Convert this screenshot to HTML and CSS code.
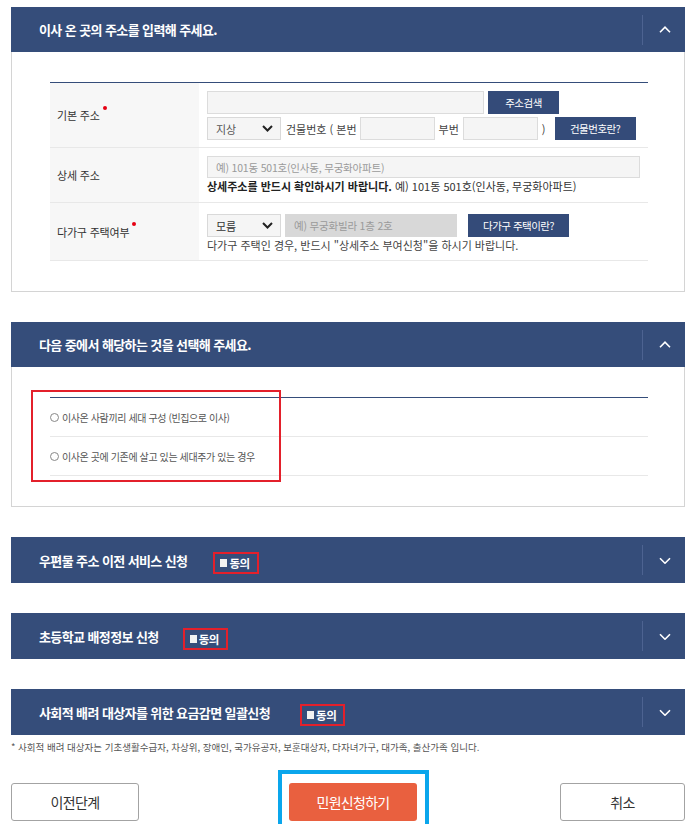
FILE: index.html
```html
<!DOCTYPE html>
<html lang="ko">
<head>
<meta charset="utf-8">
<title>전입신고</title>
<link rel="stylesheet" href="styles.css">
</head>
<body>
<div class="page">

  <section class="panel">
    <div class="panel-head">
      <h2 class="panel-title">이사 온 곳의 주소를 입력해 주세요.</h2>
      <span class="toggle"><svg width="12" height="7" viewBox="0 0 12 7"><path d="M1 6.2 L6 1.2 L11 6.2" fill="none" stroke="#fff" stroke-width="1.6"/></svg></span>
    </div>
    <div class="panel-body">
      <div class="form-table">
        <div class="row row-basic">
          <div class="th">기본 주소<span class="req"></span></div>
          <div class="td">
            <div class="line">
              <input class="inp inp-addr" type="text">
              <button class="btn-navy btn-search" type="button">주소검색</button>
            </div>
            <div class="line">
              <div class="select"><span>지상</span><svg width="11" height="7" viewBox="0 0 11 7"><path d="M1 1 L5.5 5.5 L10 1" fill="none" stroke="#222" stroke-width="2"/></svg></div>
              <span class="txt txt-bldg">건물번호 ( 본번</span>
              <input class="inp inp-num" type="text">
              <span class="txt txt-sub">부번</span>
              <input class="inp inp-num" type="text">
              <span class="txt txt-paren">)</span>
              <button class="btn-navy btn-bldg" type="button">건물번호란?</button>
            </div>
          </div>
        </div>
        <div class="row row-detail">
          <div class="th">상세 주소</div>
          <div class="td">
            <input class="inp inp-detail" type="text" placeholder="예) 101동 501호(인사동, 무궁화아파트)">
            <p class="help"><strong>상세주소를 반드시 확인하시기 바랍니다.</strong> 예) 101동 501호(인사동, 무궁화아파트)</p>
          </div>
        </div>
        <div class="row row-multi">
          <div class="th">다가구 주택여부<span class="req"></span></div>
          <div class="td">
            <div class="line">
              <div class="select"><span class="sel-strong">모름</span><svg width="11" height="7" viewBox="0 0 11 7"><path d="M1 1 L5.5 5.5 L10 1" fill="none" stroke="#222" stroke-width="2"/></svg></div>
              <input class="inp inp-disabled" type="text" placeholder="예) 무궁화빌라 1층 2호" disabled>
              <button class="btn-navy btn-multi" type="button">다가구 주택이란?</button>
            </div>
            <p class="help help-light">다가구 주택인 경우, 반드시 "상세주소 부여신청"을 하시기 바랍니다.</p>
          </div>
        </div>
      </div>
    </div>
  </section>

  <section class="panel">
    <div class="panel-head">
      <h2 class="panel-title">다음 중에서 해당하는 것을 선택해 주세요.</h2>
      <span class="toggle"><svg width="12" height="7" viewBox="0 0 12 7"><path d="M1 6.2 L6 1.2 L11 6.2" fill="none" stroke="#fff" stroke-width="1.6"/></svg></span>
    </div>
    <div class="panel-body panel-body-radio">
      <div class="radio-list">
        <label class="radio-row"><span class="radio"></span>이사온 사람끼리 세대 구성 (빈집으로 이사)</label>
        <label class="radio-row"><span class="radio"></span>이사온 곳에 기존에 살고 있는 세대주가 있는 경우</label>
      </div>
      <span class="mark-box"></span>
    </div>
  </section>

  <section class="panel panel-collapsed">
    <div class="panel-head head-tall">
      <h2 class="panel-title">우편물 주소 이전 서비스 신청</h2>
      <span class="agree agree-a"><i class="sq"></i>동의</span>
      <span class="toggle"><svg width="12" height="7" viewBox="0 0 12 7"><path d="M1 1.2 L6 6.2 L11 1.2" fill="none" stroke="#fff" stroke-width="1.6"/></svg></span>
    </div>
  </section>

  <section class="panel panel-collapsed">
    <div class="panel-head head-tall">
      <h2 class="panel-title">초등학교 배정정보 신청</h2>
      <span class="agree agree-b"><i class="sq"></i>동의</span>
      <span class="toggle"><svg width="12" height="7" viewBox="0 0 12 7"><path d="M1 1.2 L6 6.2 L11 1.2" fill="none" stroke="#fff" stroke-width="1.6"/></svg></span>
    </div>
  </section>

  <section class="panel panel-collapsed">
    <div class="panel-head head-tall">
      <h2 class="panel-title">사회적 배려 대상자를 위한 요금감면 일괄신청</h2>
      <span class="agree agree-c"><i class="sq"></i>동의</span>
      <span class="toggle"><svg width="12" height="7" viewBox="0 0 12 7"><path d="M1 1.2 L6 6.2 L11 1.2" fill="none" stroke="#fff" stroke-width="1.6"/></svg></span>
    </div>
  </section>

  <p class="note">* 사회적 배려 대상자는 기초생활수급자, 차상위, 장애인, 국가유공자, 보훈대상자, 다자녀가구, 대가족, 출산가족 입니다.</p>

  <div class="btn-row">
    <button class="btn-line btn-prev" type="button">이전단계</button>
    <div class="highlight"><button class="btn-submit" type="button">민원신청하기</button></div>
    <button class="btn-line btn-cancel" type="button">취소</button>
  </div>

</div>
</body>
</html>
```

FILE: styles.css
```css
* { box-sizing: border-box; }

html, body {
  margin: 0;
  padding: 0;
  background: #fff;
}

body {
  font-family: "Noto Sans CJK KR", "Noto Sans", sans-serif;
  color: #333;
  font-size: 11px;
}

.page {
  width: 674px;
  margin-left: 11px;
  padding-top: 7px;
}

.panel + .panel { margin-top: 30px; }

.panel-head {
  display: flex;
  align-items: center;
  height: 45px;
  padding-left: 28px;
  background: #354d7a;
}

.head-tall { height: 46px; }

.panel-title {
  margin: 0;
  font-size: 13px;
  line-height: 17px;
  font-weight: 700;
  letter-spacing: -0.6px;
  color: #fff;
}

.panel-head .toggle { margin-left: auto; }

.toggle {
  display: flex;
  align-items: center;
  justify-content: center;
  width: 43px;
  height: 30px;
  border-left: 1px solid #4d6391;
  padding-left: 2px;
}

.agree {
  display: inline-flex;
  align-items: center;
  height: 22px;
  margin-top: 5px;
  padding: 0 7px 0 5px;
  border: 2px solid #e3202b;
  color: #fff;
  font-size: 11.5px;
  font-weight: 700;
  letter-spacing: -0.5px;
  line-height: 14px;
}

.agree-a { margin-left: 26px; }
.agree-b { margin-left: 24px; }
.agree-c { margin-left: 30px; }

.agree .sq {
  display: inline-block;
  width: 7px;
  height: 8px;
  margin-right: 2px;
  background: #f2f2f2;
}

.panel-body {
  position: relative;
  border: 1px solid #d4d4d4;
  border-top: none;
  padding: 30px 36px 30px 38px;
}

.form-table { border-top: 1px solid #354d7a; }

.row {
  display: grid;
  grid-template-columns: 149px 1fr;
  border-bottom: 1px solid #e8e8e8;
}

.th {
  display: flex;
  align-items: center;
  padding-left: 7px;
  background: #f7f7f7;
  font-size: 11px;
  line-height: 16px;
  letter-spacing: -0.2px;
  color: #333;
}

.req {
  align-self: center;
  width: 4px;
  height: 4px;
  margin-left: 3px;
  margin-bottom: 15px;
  border-radius: 50%;
  background: #e60012;
}

.td { padding-left: 8px; }

.row-basic .td {
  display: flex;
  flex-direction: column;
  gap: 3px;
  padding-top: 8px;
  padding-bottom: 7px;
}

.row-detail .td { padding-top: 8px; padding-bottom: 8px; }
.row-multi .td { padding-top: 11px; padding-bottom: 7px; }

.line {
  display: flex;
  align-items: center;
  height: 23px;
}

.inp {
  height: 23px;
  margin: 0;
  padding: 0 8px;
  border: 1px solid #dcdcdc;
  background: #f5f5f5;
  font-family: "Noto Sans CJK KR", "Noto Sans", sans-serif;
  font-size: 10.5px;
  letter-spacing: -0.2px;
  color: #333;
  outline: none;
}

.inp::placeholder { color: #9a9a9a; }

.inp-addr { width: 277px; }
.inp-num { width: 75px; }
.inp-detail { display: block; width: 433px; height: 22px; }

.inp-disabled {
  width: 172px;
  margin-left: 4px;
  border-color: #d8d8d8;
  background: #d8d8d8;
}

.btn-navy {
  height: 23px;
  margin: 0;
  padding: 0;
  border: none;
  background: #344b79;
  color: #fff;
  font-family: "Noto Sans CJK KR", "Noto Sans", sans-serif;
  font-size: 10.5px;
  letter-spacing: -0.5px;
  line-height: 23px;
}

.btn-search { width: 71px; margin-left: 4px; }
.btn-bldg { width: 81px; margin-left: 9px; }
.btn-multi { width: 101px; margin-left: 11px; }

.select {
  display: flex;
  align-items: center;
  justify-content: space-between;
  width: 74px;
  height: 23px;
  padding: 0 7px 0 8px;
  border: 1px solid #d9d9d9;
  background: #f5f5f5;
  font-size: 11px;
  color: #555;
}

.sel-strong { color: #333; }

.txt {
  font-size: 11px;
  line-height: 16px;
  letter-spacing: 0;
  color: #444;
}

.txt-bldg { margin: 0 3px 0 5px; }
.txt-sub { margin: 0 4px; }
.txt-paren { margin-left: 4px; }

.help {
  margin: 0;
  font-size: 11px;
  line-height: 16px;
  letter-spacing: 0;
  color: #333;
}

.help strong { color: #222; font-weight: 700; }
.help-light { color: #444; }

.radio-list { border-top: 1px solid #354d7a; }

.radio-row {
  display: flex;
  align-items: center;
  height: 39px;
  border-bottom: 1px solid #e8e8e8;
  font-size: 10px;
  letter-spacing: -0.4px;
  color: #555;
}

.radio {
  width: 9px;
  height: 9px;
  margin-right: 3px;
  border: 1px solid #888;
  border-radius: 50%;
  background: #fff;
}

.mark-box {
  position: absolute;
  left: 19px;
  top: 23px;
  width: 250px;
  height: 92px;
  border: 2px solid #e3202b;
  pointer-events: none;
}

.note {
  margin: 5px 0 0;
  font-size: 9.5px;
  line-height: 14px;
  letter-spacing: 0;
  color: #555;
}

.btn-row {
  display: flex;
  align-items: flex-start;
  margin-top: 16px;
}

.btn-line {
  height: 38px;
  margin: 13px 0 0;
  padding: 0;
  border: 1px solid #a3a3a3;
  border-radius: 3px;
  background: #fff;
  color: #333;
  font-family: "Noto Sans CJK KR", "Noto Sans", sans-serif;
  font-size: 14px;
  letter-spacing: -0.6px;
}

.btn-prev { width: 128px; }
.btn-cancel { width: 125px; margin-left: auto; }

.highlight {
  margin-left: 139px;
  padding: 9px 8px 9px 7px;
  border: 4px solid #0aa6ec;
}

.btn-submit {
  display: block;
  width: 128px;
  height: 38px;
  margin: 0;
  padding: 0;
  border: none;
  border-radius: 3px;
  background: #e9603f;
  color: #fff;
  font-family: "Noto Sans CJK KR", "Noto Sans", sans-serif;
  font-size: 14px;
  letter-spacing: -0.7px;
}
```
